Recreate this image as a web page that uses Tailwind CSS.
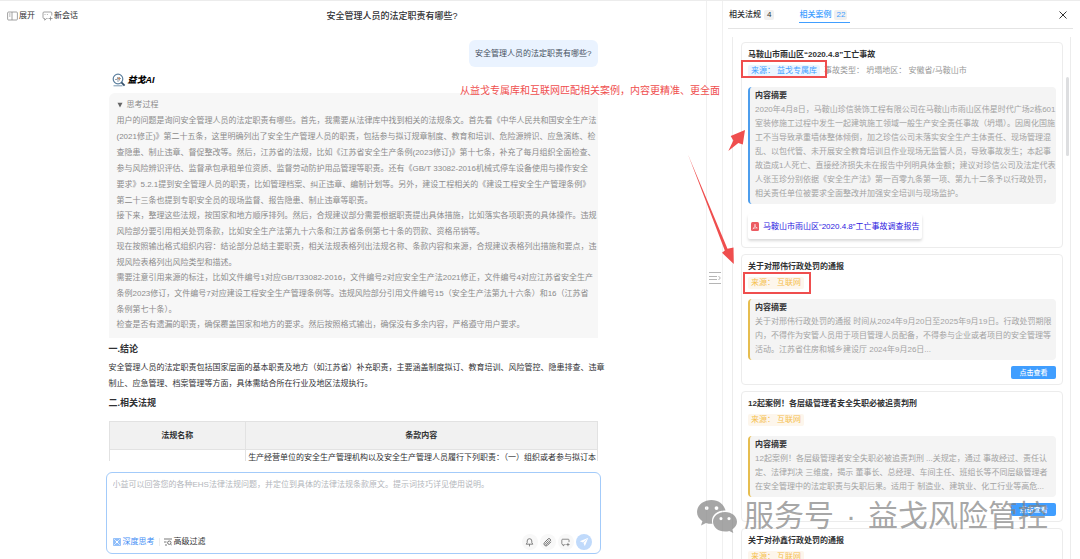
<!DOCTYPE html>
<html lang="zh-CN">
<head>
    <meta charset="UTF-8">
    <meta name="viewport" content="width=device-width, initial-scale=1.0">
    <title>益戈AI</title>
    <script src="https://cdn.jsdelivr.net/npm/@tailwindcss/browser@4"></script>
</head>
<body class="relative flex h-screen overflow-hidden border-t border-[#ececec] bg-white font-['Liberation_Sans','Noto_Sans_CJK_SC',sans-serif] text-[8px] leading-4 text-[#303133]">

    <!-- Chat -->
    <main class="flex min-w-0 flex-1 flex-col">
        <header class="flex h-[29px] shrink-0 items-center">
            <button type="button" class="ml-[7px] flex items-center gap-px text-[#303133]">
                <svg class="h-[10px] w-[11px]" viewBox="0 0 11 10" fill="none" stroke="#8a8a8a" stroke-width=".8"><rect x=".6" y="1" width="9.8" height="8" rx="1"/><path d="M5 1v8M2 3h1.5M2 5h1.5"/></svg>
                展开
            </button>
            <button type="button" class="ml-[7px] flex items-center gap-px text-[#303133]">
                <svg class="h-[10px] w-[11px]" viewBox="0 0 11 10" fill="none" stroke="#8a8a8a" stroke-width=".8"><path d="M9.800 4.500V2a1 1 0 0 0-1-1H2a1 1 0 0 0-1 1v4.500a1 1 0 0 0 1 1h.7v1.700L4.600 7.500H5.500M3 3.200v.8M5.400 3.200v.8M8.500 5.500v4M6.500 7.500h4"/></svg>
                新会话
            </button>
            <h1 class="flex-1 text-center text-[9px] font-medium">安全管理人员的法定职责有哪些?</h1>
        </header>

        <div class="min-h-0 flex-1 overflow-hidden pt-[10px]">
            <div class="mx-auto w-full max-w-[495px] px-[3px]">
                <div class="flex justify-end">
                    <p class="flex h-[27px] items-center rounded-md bg-[#eaf3ff] px-[6px] text-[#45505e]">安全管理人员的法定职责有哪些?</p>
                </div>

                <div class="mt-[6px] flex h-[14px] items-center gap-[2px] pl-[3px]">
                    <svg class="size-[14px]" viewBox="0 0 14 14" fill="none"><circle cx="6" cy="6" r="4.800" stroke="#5b7f9e" stroke-width="1.200"/><path d="M9.400 9.400l3.200 3.200" stroke="#34506b" stroke-width="1.800"/><path d="M1.500 12.800h9" stroke="#5b7f9e" stroke-width=".8"/><path d="M3 6.500h2l1-2.500v5M6 5.500h3M7.500 4v3.500" stroke="#7d8c99" stroke-width=".8"/><circle cx="7" cy="5.500" r=".9" fill="#d98b52"/></svg>
                    <span class="text-[9px] font-black italic text-black">益戈AI</span>
                </div>

                <!-- Reasoning -->
                <details open class="mt-[6px] rounded-t-md bg-[#f7f7f7] px-2 pt-1 pb-[5px] text-[#8b8b8b]">
                    <summary class="flex cursor-pointer list-none items-center gap-1">
                        <svg class="size-[6px]" viewBox="0 0 6 6" fill="#666"><path d="M.5.7h5L3 5.500z"/></svg>思考过程
                    </summary>
                    <div class="-space-y-px whitespace-nowrap">
                        <p>用户的问题是询问安全管理人员的法定职责有哪些。首先，我需要从法律库中找到相关的法规条文。首先看《中华人民共和国安全生产法<br>(2021修正)》第二十五条，这里明确列出了安全生产管理人员的职责，包括参与拟订规章制度、教育和培训、危险源辨识、应急演练、检<br>查隐患、制止违章、督促整改等。然后，江苏省的法规，比如《江苏省安全生产条例(2023修订)》第十七条，补充了每月组织全面检查、<br>参与风险辨识评估、监督承包承租单位资质、监督劳动防护用品管理等职责。还有《GB/T 33082-2016机械式停车设备使用与操作安全<br>要求》5.2.1提到安全管理人员的职责，比如管理档案、纠正违章、编制计划等。另外，建设工程相关的《建设工程安全生产管理条例》<br>第二十三条也提到专职安全员的现场监督、报告隐患、制止违章等职责。</p>
                        <p>接下来，整理这些法规，按国家和地方顺序排列。然后，合规建议部分需要根据职责提出具体措施，比如落实各项职责的具体操作。违规<br>风险部分要引用相关处罚条款，比如安全生产法第九十六条和江苏省条例第七十条的罚款、资格吊销等。</p>
                        <p>现在按照输出格式组织内容：结论部分总结主要职责，相关法规表格列出法规名称、条款内容和来源，合规建议表格列出措施和要点，违<br>规风险表格列出风险类型和描述。</p>
                        <p>需要注意引用来源的标注，比如文件编号1对应GB/T33082-2016，文件编号2对应安全生产法2021修正，文件编号4对应江苏省安全生产<br>条例2023修订，文件编号7对应建设工程安全生产管理条例等。违规风险部分引用文件编号15（安全生产法第九十六条）和16（江苏省<br>条例第七十条）。</p>
                        <p>检查是否有遗漏的职责，确保覆盖国家和地方的要求。然后按照格式输出，确保没有多余内容，严格遵守用户要求。</p>
                    </div>
                </details>

                <!-- Answer -->
                <h2 class="mt-[3px] text-[9px] font-bold">一.结论</h2>
                <p class="mt-[3px] whitespace-nowrap">安全管理人员的法定职责包括国家层面的基本职责及地方（如江苏省）补充职责，主要涵盖制度拟订、教育培训、风险管控、隐患排查、违章<br>制止、应急管理、档案管理等方面，具体需结合所在行业及地区法规执行。</p>
                <h2 class="mt-[3px] text-[9px] font-bold">二.相关法规</h2>
                <table class="mt-[10px] w-full table-fixed border-collapse">
                    <thead>
                        <tr class="h-7 bg-[#f1f1f1]">
                            <th class="w-[28%] border border-[#e2e2e2] font-bold">法规名称</th>
                            <th class="border border-[#e2e2e2] font-bold">条款内容</th>
                        </tr>
                    </thead>
                    <tbody>
                        <tr>
                            <td class="border border-[#e2e2e2]"></td>
                            <td class="border border-[#e2e2e2] pl-[2px] whitespace-nowrap">生产经营单位的安全生产管理机构以及安全生产管理人员履行下列职责：（一）组织或者参与拟订本</td>
                        </tr>
                    </tbody>
                </table>
            </div>
        </div>

        <!-- Composer -->
        <form class="mx-auto mt-[11px] mb-[5px] flex h-[82px] w-full max-w-[495px] shrink-0 flex-col rounded-md border border-[#a3cbfa] px-[6px] pt-1 pb-[3px]">
            <textarea aria-label="提问" class="w-full flex-1 resize-none text-[8px] leading-4 outline-none placeholder:text-[#b3b6bb]" placeholder="小益可以回答您的各种EHS法律法规问题，并定位到具体的法律法规条款原文。提示词技巧详见使用说明。"></textarea>
            <div class="flex items-center">
                <button type="button" class="flex items-center gap-[2px] text-[#3f8ef5]">
                    <svg class="size-2" viewBox="0 0 8 8" fill="none" stroke="currentColor" stroke-width=".6"><rect x=".4" y=".4" width="7.200" height="7.200" rx=".6"/><ellipse cx="4" cy="4" rx="3.200" ry="1.700" transform="rotate(45 4 4)"/><ellipse cx="4" cy="4" rx="3.200" ry="1.700" transform="rotate(-45 4 4)"/></svg>
                    深度思考
                </button>
                <span class="mx-1 h-2 w-px bg-[#ececec]"></span>
                <button type="button" class="flex items-center gap-[2px]">
                    <svg class="size-2" viewBox="0 0 8 8" fill="none" stroke="#555" stroke-width=".8"><path d="M0 1h8M0 4h2.500M1 7h2M6.800 6.200L7.900 7.400"/><circle cx="5.300" cy="4.700" r="1.700"/></svg>
                    高级过滤
                </button>
                <div class="mr-[2px] ml-auto flex items-center gap-[2px] text-[#666]">
                    <button type="button" aria-label="语音" class="flex size-4 items-center justify-center rounded-full bg-[#f8f8f8]">
                        <svg class="size-[9px]" viewBox="0 0 9 9" fill="none" stroke="currentColor" stroke-width=".8"><path d="M4.500.7a2.300 2.300 0 0 1 2.300 2.300v1.700l1 1.500H1.200l1-1.500V3A2.300 2.300 0 0 1 4.500.7zM4.500 6.200v2.200"/></svg>
                    </button>
                    <button type="button" aria-label="附件" class="flex size-4 items-center justify-center rounded-full bg-[#f8f8f8]">
                        <svg class="size-[9px]" viewBox="0 0 9 9" fill="none" stroke="currentColor" stroke-width=".9"><path d="M8 3.800L4.500 7.300a2 2 0 0 1-2.900-2.900L5 1a1.400 1.400 0 0 1 2.100 2.100L3.800 6.300a.7.7 0 0 1-1-1L5.700 2.400"/></svg>
                    </button>
                    <button type="button" aria-label="新会话" class="flex size-4 items-center justify-center rounded-full bg-[#f8f8f8]">
                        <svg class="size-[9px]" viewBox="0 0 11 10" fill="none" stroke="currentColor" stroke-width=".9"><path d="M9.800 4.500V2a1 1 0 0 0-1-1H2a1 1 0 0 0-1 1v4.500a1 1 0 0 0 1 1h.7v1.700L4.600 7.500H5.500M8.500 5.500v4M6.500 7.500h4"/></svg>
                    </button>
                    <button type="submit" aria-label="发送" class="flex size-4 items-center justify-center rounded-full bg-[#c0dafb]">
                        <svg class="size-[10px]" viewBox="0 0 10 10" fill="#fff"><path d="M9.300.7L.8 4.200l3.200 1.300zM9.300.7L5.800 9.200 4.500 6z"/></svg>
                    </button>
                </div>
            </div>
        </form>
    </main>

    <!-- Collapse handle -->
    <div class="flex w-[17px] shrink-0 items-center justify-center border-x border-[#f0f0f0]">
        <button type="button" aria-label="收起" class="pb-1">
            <svg class="h-3 w-3" viewBox="0 0 12 12" fill="none" stroke="#b5b5b5"><path d="M0 .5h12M0 4.500h8M0 7.500h8M0 11.500h12M9.500 4l1.800 2-1.800 2"/></svg>
        </button>
    </div>

    <!-- Sources -->
    <aside class="flex w-[357px] shrink-0 flex-col pr-[7px] pl-[5px]">
        <nav class="flex h-7 shrink-0 items-center border-b border-[#e4e4e4]">
            <button type="button" class="ml-px flex h-4 items-center gap-[3px] pt-px font-medium">相关法规 <span class="flex h-[10px] items-center rounded-xs bg-[#f0f0f0] px-[3px]">4</span></button>
            <button type="button" class="ml-[25px] flex h-4 items-center gap-[3px] border-b border-[#409eff] pt-[2px] pr-[3px] font-medium text-[#409eff]">相关案例 <span class="flex h-[10px] items-center rounded-xs bg-[#f0f0f0] px-[2px]">22</span></button>
            <button type="button" aria-label="关闭" class="mr-[6px] ml-auto"><svg class="size-2" viewBox="0 0 8 8" fill="none" stroke="#333"><path d="M.5.5l7 7M7.500.5l-7 7"/></svg></button>
        </nav>

        <div class="relative mt-2 mr-[2px] ml-1 flex min-h-0 flex-1 flex-col gap-[6px] overflow-hidden border-x border-[#ececec] pt-[5px] pr-[7px] pl-2">
            <article class="relative shrink-0 rounded-sm border border-[#ececec] px-[6px] pt-1 pb-[5px]">
                <h3 class="font-bold">马鞍山市雨山区“2020.4.8”工亡事故</h3>
                <div class="flex h-4 items-center gap-1 text-[#999]">
                    <span class="flex h-3 items-center gap-[2px] rounded-xs bg-[#ecf5ff] px-[3px] text-[#409eff]"><span>来源：</span><span>益戈专属库</span></span>
                    <span>事故类型： 坍塌地区： 安徽省/马鞍山市</span>
                </div>
                <span class="absolute -left-px top-[17px] h-[18px] w-[86px] border-2 border-[#ef4e4e]"></span>
                <div class="mt-2 rounded-sm border-l-2 border-[#4c9ded] bg-[#f4f4f4] pt-[2px] pb-[3px] pl-[5px] leading-[14px]">
                    <h4 class="font-bold">内容摘要</h4>
                    <p class="whitespace-nowrap text-[#a3a3a3]">2020年4月8日，马鞍山珍信装饰工程有限公司在马鞍山市雨山区伟星时代广场2栋601<br>室装修施工过程中发生一起建筑施工领域一般生产安全责任事故（坍塌）。因周化国施<br>工不当导致承重墙体整体倾倒，加之珍信公司未落实安全生产主体责任、现场管理混<br>乱、以包代管、未开展安全教育培训且作业现场无监管人员，导致事故发生；本起事<br>故造成1人死亡、直接经济损失未在报告中列明具体金额；建议对珍信公司及法定代表<br>人张玉珍分别依据《安全生产法》第一百零九条第一项、第九十二条予以行政处罚，<br>相关责任单位被要求全面整改并加强安全培训与现场监护。</p>
                </div>
                <a href="#" class="mt-[10px] mb-[3px] flex h-[25px] w-fit items-center gap-1 rounded-xs px-[3px] text-[#2a20e0] shadow-[0_2px_3px_rgba(0,0,0,0.15)]">
                    <svg class="h-[9px] w-2" viewBox="0 0 8 9"><rect width="8" height="9" rx="1.500" fill="#ec5b62"/><path d="M1.800 6.800C3.500 5.800 4 4 4 2.200c0 2 .8 3.500 2.300 3.800-1.700-.3-3.200 0-4.500.8z" fill="none" stroke="#fff" stroke-width=".6"/></svg>
                    马鞍山市雨山区“2020.4.8”工亡事故调查报告
                </a>
            </article>

            <article class="relative shrink-0 rounded-sm border border-[#ececec] px-[6px] pt-1 pb-[5px]">
                <h3 class="font-bold">关于对邢伟行政处罚的通报</h3>
                <div class="flex h-4 items-center">
                    <span class="flex h-3 items-center gap-[2px] rounded-xs bg-[#fdf6ec] px-[3px] text-[#f5c04f]"><span>来源：</span><span>互联网</span></span>
                </div>
                <span class="absolute left-px top-[17px] h-[22px] w-[68px] border-2 border-[#ef4e4e]"></span>
                <div class="mt-2 rounded-sm border-l-2 border-[#e6bd4f] bg-[#f4f4f4] pt-[2px] pb-[3px] pl-[5px] leading-[14px]">
                    <h4 class="font-bold">内容摘要</h4>
                    <p class="whitespace-nowrap text-[#a3a3a3]">关于对邢伟行政处罚的通报 时间从2024年9月20日至2025年9月19日。行政处罚期限<br>内，不得作为安管人员用于项目管理人员配备，不得参与企业或者项目的安全管理等<br>活动。江苏省住房和城乡建设厅 2024年9月26日...</p>
                </div>
                <button type="button" class="mt-[6px] ml-auto flex h-[13px] w-[45px] items-center justify-center rounded-xs bg-[#409eff] text-[7px] font-medium text-white">点击查看</button>
            </article>

            <article class="relative shrink-0 rounded-sm border border-[#ececec] px-[6px] pt-1 pb-[5px]">
                <h3 class="font-bold">12起案例！各层级管理者安全失职必被追责判刑</h3>
                <div class="flex h-4 items-center">
                    <span class="flex h-3 items-center gap-[2px] rounded-xs bg-[#fdf6ec] px-[3px] text-[#f5c04f]"><span>来源：</span><span>互联网</span></span>
                </div>
                <div class="mt-2 rounded-sm border-l-2 border-[#e6bd4f] bg-[#f4f4f4] pt-[2px] pb-[3px] pl-[5px] leading-[14px]">
                    <h4 class="font-bold">内容摘要</h4>
                    <p class="whitespace-nowrap text-[#a3a3a3]">12起案例！各层级管理者安全失职必被追责判刑 ...关规定，通过 事故经过、责任认<br>定、法律判决 三维度，揭示 董事长、总经理、车间主任、班组长等不同层级管理者<br>在安全管理中的法定职责与失职后果。适用于 制造业、建筑业、化工行业等高危...</p>
                </div>
                <button type="button" class="mt-[6px] ml-auto flex h-[13px] w-[45px] items-center justify-center rounded-xs bg-[#409eff] text-[7px] font-medium text-white">点击查看</button>
            </article>

            <article class="relative shrink-0 rounded-sm border border-[#ececec] px-[6px] pt-1 pb-[5px]">
                <h3 class="font-bold">关于对孙鑫行政处罚的通报</h3>
                <div class="flex h-4 items-center">
                    <span class="flex h-3 items-center gap-[2px] rounded-xs bg-[#fdf6ec] px-[3px] text-[#f5c04f]"><span>来源：</span><span>互联网</span></span>
                </div>
            </article>

            <span class="absolute top-10 right-px h-[79px] w-[3px] rounded-full bg-[#dddee0]"></span>
        </div>
    </aside>

    <!-- Annotations -->
    <p class="absolute top-[82px] right-[360px] text-[10px] text-[#ef4e4e]">从益戈专属库和互联网匹配相关案例，内容更精准、更全面</p>
    <svg class="pointer-events-none absolute top-[119px] right-[330px] h-[150px] w-[70px]" viewBox="680 120 70 150" fill="#ef4e4e">
        <path d="M688 154.500L727.500 248.800L733.500 247.500L733.800 264L722 252.800L724.800 250.500Z"/>
        <path d="M728.300 151L733.300 140.500L730.700 136L745 130L742.800 144.500L738.300 143Z"/>
    </svg>

    <!-- Watermark -->
    <div class="pointer-events-none absolute right-8 bottom-[23px] flex items-center text-[#808080]/70">
        <svg class="mr-[7px] h-[33px] w-10" viewBox="0 0 40 33">
            <path fill="currentColor" fill-rule="evenodd" d="M14.500 0C6.500 0 0 5.300 0 12c0 3.800 2.100 7 5.400 9.200L4 25.500l5-2.600c1.700.5 3.500.9 5.500.9h.9C13.300 16.500 19 10.500 27.500 10.500h1C27.200 4.400 21.300 0 14.500 0zM9.700 6.200a1.900 1.900 0 1 1 0 3.800 1.900 1.900 0 0 1 0-3.800zM19.500 6.200a1.900 1.900 0 1 1 0 3.800 1.900 1.900 0 0 1 0-3.800z"/>
            <path fill="currentColor" fill-rule="evenodd" d="M28 12c-6.800 0-12 4.300-12 9.800s5.200 9.800 12 9.800c1.500 0 3-.3 4.300-.7L36.300 33l-1-3.600c2.900-1.800 4.700-4.500 4.700-7.600 0-5.500-5.200-9.800-12-9.800zM24 17a1.600 1.600 0 1 1 0 3.200 1.600 1.600 0 0 1 0-3.200zM32 17a1.600 1.600 0 1 1 0 3.200 1.600 1.600 0 0 1 0-3.200z"/>
        </svg>
        <p class="flex gap-3 text-[30px] leading-10"><span>服务号</span><span>·</span><span>益戈风险管控</span></p>
    </div>
</body>
</html>
